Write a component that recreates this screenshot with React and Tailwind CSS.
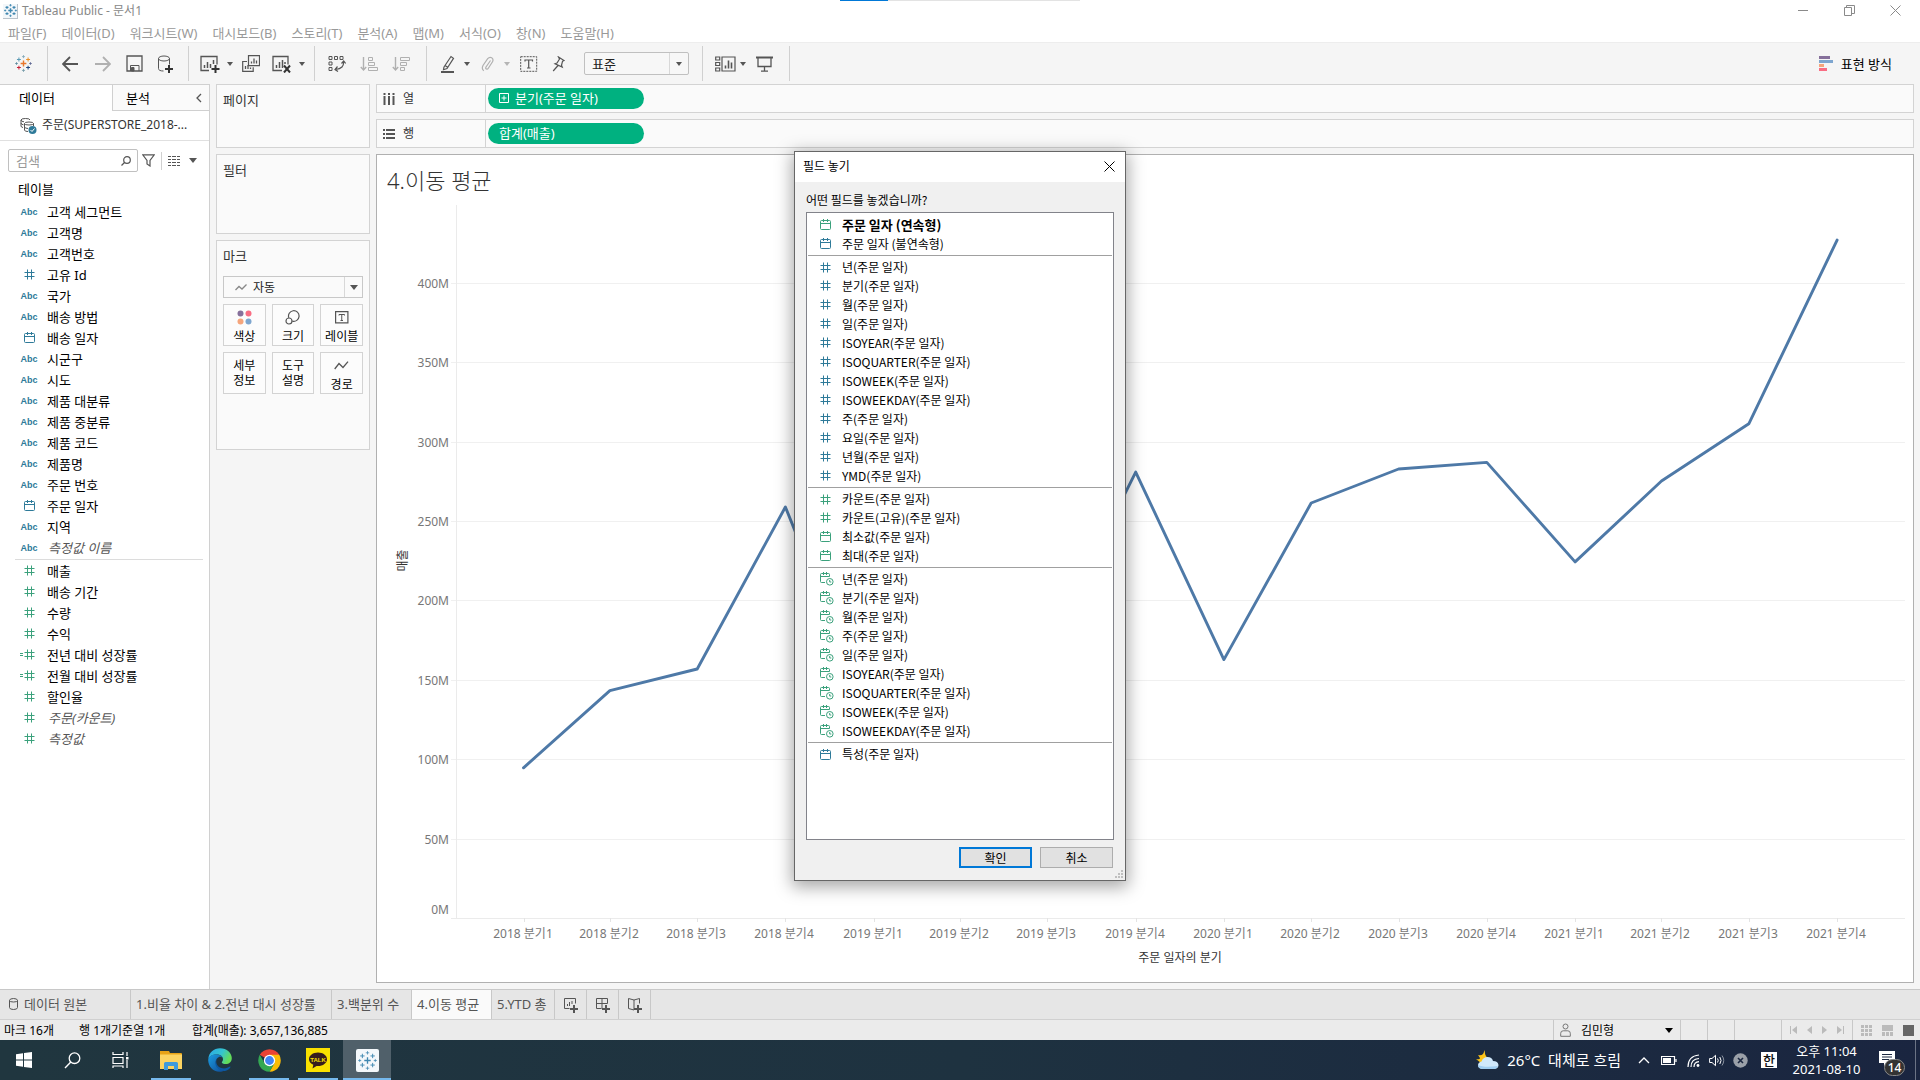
import React from "react";

const BLUE = "#2e7a99";
const GREEN = "#3ba17c";

/* ---------- icons ---------- */

function Icon({ w = 16, h = 16, box, className = "", children, ...rest }) {
  return (
    <svg
      width={w}
      height={h}
      viewBox={box || `0 0 ${w} ${h}`}
      fill="none"
      stroke="currentColor"
      className={`shrink-0 ${className}`}
      aria-hidden="true"
      {...rest}
    >
      {children}
    </svg>
  );
}

const plus = (x, y, r) => `M${x - r} ${y}h${2 * r}M${x} ${y - r}v${2 * r}`;

function TableauMark({ size = 16, colors, sw = 1.2 }) {
  const c = colors;
  return (
    <Icon w={size} h={size} box="0 0 20 20">
      <path d={plus(10, 10, 3.4)} stroke={c[0]} strokeWidth={sw * 1.4} />
      <path d={plus(4.6, 5.2, 2.3)} stroke={c[1]} strokeWidth={sw} />
      <path d={plus(15.4, 5.2, 2.3)} stroke={c[2]} strokeWidth={sw} />
      <path d={plus(4.6, 14.8, 2.3)} stroke={c[3]} strokeWidth={sw} />
      <path d={plus(15.4, 14.8, 2.3)} stroke={c[4]} strokeWidth={sw} />
      <path d={plus(10, 1.9, 1.8)} stroke={c[5]} strokeWidth={sw * 0.8} />
      <path d={plus(10, 18.1, 1.8)} stroke={c[6]} strokeWidth={sw * 0.8} />
      <path d={plus(1.8, 10, 1.6)} stroke={c[7]} strokeWidth={sw * 0.8} />
      <path d={plus(18.2, 10, 1.6)} stroke={c[8]} strokeWidth={sw * 0.8} />
    </Icon>
  );
}

const BRAND = ["#e8762c", "#5c9bb5", "#eb9129", "#c72035", "#1f447e", "#7fa6b8", "#7199a6", "#59879b", "#5b6591"];
const MONO = Array(9).fill("#3f87b0");

function Caret({ className = "text-[#555]" }) {
  return (
    <Icon w={8} h={5} className={className}>
      <path d="M0 0h8L4 5z" fill="currentColor" stroke="none" />
    </Icon>
  );
}

function SmallCaret({ light }) {
  return (
    <Icon w={6} h={4} className={light ? "text-[#b5b5b5]" : "text-[#555]"}>
      <path d="M0 0h6L3 4z" fill="currentColor" stroke="none" />
    </Icon>
  );
}

function Hash({ color }) {
  return (
    <Icon w={11} h={11} color={color}>
      <path d="M3.5 .5v10M7.5 .5v10M.5 3.5h10M.5 7.5h10" />
    </Icon>
  );
}

function CalcHash({ color }) {
  return (
    <Icon w={15} h={11} color={color} className="-ml-1">
      <path d="M7.5 .5v10M11.5 .5v10M4.5 3.5h10M4.5 7.5h10M0 4.5h3M0 6.5h3" />
    </Icon>
  );
}

function Calendar({ color }) {
  return (
    <Icon w={11} h={11} color={color}>
      <path d="M.5 2.5q0-1 1-1h8q1 0 1 1v7q0 1-1 1h-8q-1 0-1-1zM.5 4.5h10M3.5 0v3M7.5 0v3" />
    </Icon>
  );
}

function CalendarClock({ color }) {
  return (
    <Icon w={14} h={14} color={color}>
      <path d="M5 10.500h-3.500q-1 0-1-1v-7q0-1 1-1h7q1 0 1 1v2M.5 4.500h9M3.500 0v3M6.500 0v3" />
      <circle cx="9.800" cy="9.800" r="3.300" />
      <path d="M9.700 8v2h1.600" />
    </Icon>
  );
}

function FieldIcon({ kind, color }) {
  if (kind === "abc")
    return <span className="font-['Liberation_Sans',sans-serif] text-[9px] leading-3 font-bold text-[#2e7a99]">Abc</span>;
  if (kind === "cal") return <Calendar color={color} />;
  if (kind === "clock") return <CalendarClock color={color} />;
  if (kind === "calc") return <CalcHash color={color} />;
  return <Hash color={color} />;
}

/* ---------- title bar, menus ---------- */

function TitleBar() {
  return (
    <header className="relative flex h-[22px] items-center bg-white text-[#888]">
      <div className="ml-[3px] flex size-[15px] items-center justify-center border-r border-b border-[#b9c3cb] bg-[#f3f7fa]">
        <TableauMark size={13} colors={MONO} sw={1.6} />
      </div>
      <h1 className="ml-1 text-[12px] leading-5">Tableau Public - 문서1</h1>
      <div className="absolute inset-x-0 top-0 flex justify-center">
        <div className="h-px w-[48px] bg-[#0078d7]" />
        <div className="h-px w-[192px] bg-[#e3e3e3]" />
      </div>
      <div className="mr-[2px] ml-auto flex h-full pb-px text-[#8a8a8a]">
        <button className="flex w-[46px] items-center justify-center" aria-label="최소화">
          <Icon w={10} h={11}><path d="M0 5.500h10" /></Icon>
        </button>
        <button className="flex w-[46px] items-center justify-center" aria-label="복원">
          <Icon w={11} h={11}><path d="M.5 2.500h7v8h-7zM2.500 2.500v-2h8v8h-3" /></Icon>
        </button>
        <button className="flex w-[46px] items-center justify-center pl-px" aria-label="닫기">
          <Icon w={11} h={11}><path d="M.5.5l10 10M10.500.5l-10 10" /></Icon>
        </button>
      </div>
    </header>
  );
}

const MENUS = ["파일(F)", "데이터(D)", "워크시트(W)", "대시보드(B)", "스토리(T)", "분석(A)", "맵(M)", "서식(O)", "창(N)", "도움말(H)"];

function MenuBar() {
  return (
    <nav className="flex h-[21px] gap-[15px] border-b border-[#ededed] bg-white pl-2 text-[13px] leading-[22px] text-[#999]">
      {MENUS.map((m) => (
        <button key={m} className="whitespace-nowrap">{m}</button>
      ))}
    </nav>
  );
}

/* ---------- toolbar ---------- */

function Tool({ label, w = "w-8", children }) {
  return (
    <button aria-label={label} className={`flex h-8 ${w} shrink-0 items-center justify-center`}>
      {children}
    </button>
  );
}

function Divider() {
  return <div className="h-[35px] w-px shrink-0 bg-[#d0d0d0]" />;
}

function Toolbar() {
  return (
    <div className="flex h-[41px] shrink-0 items-center bg-[#f5f5f5] text-[#555]">
      <Tool label="시작 페이지" w="w-[47px]">
        <TableauMark size={17} colors={BRAND} />
      </Tool>
      <Divider />
      <div className="flex pr-2 pl-[6px]">
        <Tool label="실행 취소">
          <Icon w={17} h={16}><path d="M1 8h15M8 1L1 8l7 7" strokeWidth="1.800" /></Icon>
        </Tool>
        <Tool label="다시 실행">
          <Icon w={17} h={16} className="text-[#b0b0b0]"><path d="M1 8h15M9 1l7 7-7 7" strokeWidth="1.800" /></Icon>
        </Tool>
        <Tool label="저장">
          <Icon w={17} h={17}>
            <path d="M1 1h15v15H1z" strokeWidth="1.300" />
            <path d="M4.500 16v-5.500h8.500V16" />
            <path d="M5.500 12.500h2.500V16h-2.500z" fill="currentColor" />
          </Icon>
        </Tool>
        <Tool label="새 데이터 원본" w="w-[30px]">
          <Icon w={17} h={18}>
            <ellipse cx="7" cy="3.500" rx="5.500" ry="2.500" />
            <path d="M1.500 3.500v10q0 2.500 5 2.500M12.500 3.500v6" />
            <path d="M12 10v8M8 14h8" strokeWidth="2" stroke="#333" />
          </Icon>
        </Tool>
      </div>
      <Divider />
      <div className="flex items-center pr-[6px] pl-[5px]">
        <Tool label="새 워크시트">
          <Icon w={20} h={18}>
            <path d="M9 15.500H1V1.500h16v8" strokeWidth="1.300" />
            <path d="M4.500 13v-3M7.500 13V7M10.500 13V9M13.500 9V5" strokeWidth="1.500" />
            <path d="M15.500 10v8M11.500 14h8" strokeWidth="2" stroke="#333" />
          </Icon>
        </Tool>
        <Tool label="새로 만들기 메뉴" w="w-2"><SmallCaret /></Tool>
        <Tool label="복제" w="w-[34px]">
          <Icon w={18} h={17}>
            <path d="M6.500.7h11v10h-11zM5 6.500H.7v9.800h10.500v-4" strokeWidth="1.200" />
            <path d="M9.500 8.500v-2M12 8.500v-5M14.500 8.500v-3M3.500 14v-3M6 14v-4M8.500 14v-1.500" strokeWidth="1.300" />
          </Icon>
        </Tool>
        <Tool label="시트 지우기" w="w-7">
          <Icon w={20} h={18}>
            <path d="M10 15.500H1V1.500h15v8" strokeWidth="1.300" />
            <path d="M4.500 13v-3M7.500 13V7M10.500 13V5M13 9V7" strokeWidth="1.500" />
            <path d="M12 10.500l6 7M18 10.500l-6 7" strokeWidth="2" stroke="#333" />
          </Icon>
        </Tool>
        <Tool label="지우기 메뉴" w="w-3"><SmallCaret /></Tool>
      </div>
      <Divider />
      <div className="flex items-center pr-[9px] pl-[6px]">
        <Tool label="행과 열 바꾸기">
          <Icon w={18} h={17}>
            <path d="M1 1.500h3v3H1zM6.500 1.500h3v3h-3zM12 1.500h3v3h-3zM1 7h3v3H1zM1 12.500h3v3H1z" />
            <path d="M15.500 6.500q1 7-8 8M13.500 8.500l2.200-2.500 2 2.500M9.500 11.500L7 14.500l3 2" strokeWidth="1.200" />
          </Icon>
        </Tool>
        <Tool label="오름차순 정렬">
          <Icon w={18} h={16} className="text-[#b0b0b0]">
            <path d="M3.500 1v13M.8 11l2.700 3 2.700-3" strokeWidth="1.400" />
            <path d="M8.500 1.500h4v3h-4zM8.500 6.500h6v3h-6zM8.500 11.500h9v3h-9z" />
          </Icon>
        </Tool>
        <Tool label="내림차순 정렬">
          <Icon w={18} h={16} className="text-[#b0b0b0]">
            <path d="M3.500 1v13M.8 11l2.700 3 2.700-3" strokeWidth="1.400" />
            <path d="M8.500 1.500h9v3h-9zM8.500 6.500h6v3h-6zM8.500 11.500h4v3h-4z" />
          </Icon>
        </Tool>
      </div>
      <Divider />
      <div className="flex items-center pl-2">
        <Tool label="강조 표시" w="w-[26px]">
          <Icon w={14} h={18}>
            <path d="M3 12l7-10.500 2.500 1.800L6 13.500l-3.500 1.200zM4 10.500l3 2" strokeWidth="1.200" />
            <path d="M0 17h13" strokeWidth="2" />
          </Icon>
        </Tool>
        <Tool label="강조 표시 메뉴" w="w-3"><SmallCaret /></Tool>
        <Tool label="그룹" w="w-7">
          <Icon w={13} h={16} className="text-[#b0b0b0]">
            <path d="M9.500 4.500L5 11q-.8 1.500.5 2 1 .5 1.800-.8l4.200-6.400q1.300-2.600-.8-4-2.200-1.200-4 .9L2 9.500Q.3 12.800 2.800 14.800" strokeWidth="1.200" />
          </Icon>
        </Tool>
        <Tool label="그룹 메뉴" w="w-3"><SmallCaret light /></Tool>
        <Tool label="마크 레이블 표시">
          <Icon w={18} h={16}>
            <path d="M.7.7h16v14.600h-16z" strokeDasharray="2 1" />
            <path d="M5 5.500V4h7.500v1.500M8.700 4v8M7 12h3.500" strokeWidth="1.200" />
          </Icon>
        </Tool>
        <Tool label="축 고정" w="w-[26px]">
          <Icon w={13} h={16}>
            <path d="M6.500 1l5.500 3.500-1.500.8-1 4 .7 1.700L3 7.800l2-.8L7.500 3zM6 9.500L1.200 15" strokeWidth="1.200" />
          </Icon>
        </Tool>
      </div>
      <div className="relative ml-[13px] flex h-[23px] w-[105px] items-center rounded-xs border border-[#c0c0c0] bg-[#f7f7f7]">
        <select aria-label="맞춤" className="h-full w-full appearance-none bg-transparent pl-[7px] text-[13px] leading-5 text-[#222] outline-none">
          <option>표준</option>
        </select>
        <span className="pointer-events-none absolute inset-y-0 right-0 flex w-[19px] items-center justify-center border-l border-[#d8d8d8]">
          <SmallCaret />
        </span>
      </div>
      <div className="ml-[13px]"><Divider /></div>
      <div className="flex items-center pr-2 pl-[8px]">
        <Tool label="카드 표시" w="w-7">
          <Icon w={21} h={16}>
            <path d="M.7 1h4v3h-4zM.7 6.500h4v3h-4zM.7 12h4v3h-4zM7 1h13v14H7z" strokeWidth="1.200" />
            <path d="M10.500 12.500v-3M13.500 12.500v-8M16.500 12.500v-6" strokeWidth="1.600" />
          </Icon>
        </Tool>
        <Tool label="카드 메뉴" w="w-2"><SmallCaret /></Tool>
        <Tool label="프레젠테이션 모드" w="w-[34px]">
          <Icon w={17} h={16}>
            <path d="M0 1.500h17" strokeWidth="2" />
            <path d="M2 2v8.500h13V2M8.500 10.500V15M5 15.200h7" strokeWidth="1.300" />
          </Icon>
        </Tool>
      </div>
      <Divider />
      <button className="mr-7 ml-auto flex items-center gap-[7px] text-[13px] leading-5 whitespace-nowrap text-black">
        <Icon w={15} h={16} stroke="none">
          <path d="M0 0h11v3H0z" fill="#86709b" />
          <path d="M0 4h14v3H0z" fill="#7ea6cf" />
          <path d="M0 8h5v3H0z" fill="#f5a57c" />
          <path d="M0 12h8v3H0z" fill="#f96d83" />
        </Icon>
        표현 방식
      </button>
    </div>
  );
}

/* ---------- data pane ---------- */

const DIMENSIONS = [
  ["abc", "고객 세그먼트"], ["abc", "고객명"], ["abc", "고객번호"], ["num", "고유 Id"], ["abc", "국가"],
  ["abc", "배송 방법"], ["cal", "배송 일자"], ["abc", "시군구"], ["abc", "시도"], ["abc", "제품 대분류"],
  ["abc", "제품 중분류"], ["abc", "제품 코드"], ["abc", "제품명"], ["abc", "주문 번호"], ["cal", "주문 일자"],
  ["abc", "지역"], ["abc", "측정값 이름", true],
];
const MEASURES = [
  ["num", "매출"], ["num", "배송 기간"], ["num", "수량"], ["num", "수익"], ["calc", "전년 대비 성장률"],
  ["calc", "전월 대비 성장률"], ["num", "할인율"], ["num", "주문(카운트)", true], ["num", "측정값", true],
];

function FieldList({ fields, color }) {
  return (
    <ul>
      {fields.map(([kind, name, generated]) => (
        <li key={name} className="flex h-[21px] items-center">
          <span className="ml-[17px] flex w-6 justify-center"><FieldIcon kind={kind} color={color} /></span>
          <span className={generated ? "ml-[7px] text-[#555] italic" : "ml-[6px]"}>{name}</span>
        </li>
      ))}
    </ul>
  );
}

function DataPane() {
  return (
    <aside className="flex w-[210px] shrink-0 flex-col border-r border-[#d0d0d0] bg-white text-[13px] leading-5 text-black">
      <div className="flex h-[27px]">
        <button className="w-[112px] border-t border-[#d0d0d0] pl-[19px] text-left">데이터</button>
        <button className="flex flex-1 items-center justify-between border border-r-0 border-[#d0d0d0] bg-[#fafafa] pr-[7px] pl-[13px]">
          분석
          <Icon w={6} h={10} className="text-[#555]"><path d="M5 1L1 5l4 4" strokeWidth="1.300" /></Icon>
        </button>
      </div>
      <button className="flex h-[30px] items-center border-b border-[#e0e0e0] pb-px pl-5 text-[#333]">
        <Icon w={17} h={17} className="text-[#555]">
          <path d="M3 10.500q-2-.3-2-1.500V3q0-1.500 4.500-1.500T10 3M1 3q0 1.500 3 1.800M1 6q0 1.500 2.500 1.800" />
          <path d="M8 14.500q-3.500 0-3.500-1.500V6.500Q4.500 5 9 5t4.500 1.500V9M4.500 6.500q0 1.500 4.500 1.500t4.500-1.500M4.500 10q0 1.300 3.500 1.500" />
          <circle cx="12.500" cy="13" r="4" fill={BLUE} stroke="none" />
          <path d="M10.500 13l1.500 1.500 2.500-3" stroke="#fff" />
        </Icon>
        <span className="ml-[5px] text-[12px] whitespace-nowrap">주문(SUPERSTORE_2018-...</span>
      </button>
      <div className="mt-2 flex h-[23px] items-center pl-2 text-[#555]">
        <div className="flex h-full w-[130px] items-center rounded-xs border border-[#c0c0c0] pr-[6px]">
          <input aria-label="필드 검색" className="w-full min-w-0 pl-[7px] outline-none placeholder:text-[#999]" placeholder="검색" />
          <Icon w={10} h={10}>
            <circle cx="6" cy="4" r="3.300" strokeWidth="1.200" />
            <path d="M3.500 6.500L.5 9.500" strokeWidth="1.300" />
          </Icon>
        </div>
        <button aria-label="필터" className="ml-1"><Icon w={13} h={13}><path d="M.7.8h11.600L8 6.500V12L5 10V6.500z" strokeWidth="1.200" /></Icon></button>
        <span className="ml-[6px] h-[18px] w-px bg-[#d0d0d0]" />
        <button aria-label="보기" className="ml-[6px]">
          <Icon w={12} h={10}><path d="M0 .5h12M0 3.500h12M0 6.500h12M0 9.500h12" strokeDasharray="3.300 1" shapeRendering="crispEdges" /></Icon>
        </button>
        <button aria-label="보기 메뉴" className="ml-[9px]"><Caret /></button>
      </div>
      <h2 className="mt-[7px] mb-[2px] ml-[18px] leading-5">테이블</h2>
      <FieldList fields={DIMENSIONS} color={BLUE} />
      <div className="mr-[6px] ml-[15px] border-b border-[#dcdcdc] pt-px" />
      <FieldList fields={MEASURES} color={GREEN} />
    </aside>
  );
}

/* ---------- cards ---------- */

function Card({ title, h, children }) {
  return (
    <section className={`border border-[#d3d3d3] bg-[#fafafa] px-[6px] ${h}`}>
      <h2 className="mt-[5px] text-[13px] leading-5 text-[#333]">{title}</h2>
      {children}
    </section>
  );
}

function MarkButton({ icon, children }) {
  return (
    <button
      className={`flex h-[42px] flex-col items-center border border-[#d3d3d3] bg-[#fcfcfc] text-[12px] leading-[15px] whitespace-nowrap text-black ${icon ? "justify-start gap-[2px] pt-[3px]" : "justify-center"}`}
    >
      {icon && <span className="flex h-[19px] items-center text-[#555]">{icon}</span>}
      <span>{children}</span>
    </button>
  );
}

function Cards() {
  return (
    <div className="ml-[6px] flex w-[154px] shrink-0 flex-col gap-[6px]">
      <Card title="페이지" h="h-16" />
      <Card title="필터" h="h-20" />
      <Card title="마크" h="h-[210px]">
        <div className="relative mt-[10px] flex h-[22px] items-center border border-[#c8c8c8] bg-[#fafafa]">
          <Icon w={12} h={7} className="pointer-events-none absolute left-[11px] text-[#888]">
            <path d="M.5 6L4 2.500 7 5l4.500-4.500" strokeWidth="1.300" />
          </Icon>
          <select aria-label="마크 유형" className="h-full w-full appearance-none bg-transparent pt-px pl-[29px] text-[12px] leading-5 text-[#222] outline-none">
            <option>자동</option>
          </select>
          <span className="pointer-events-none absolute inset-y-0 right-0 flex w-[18px] items-center justify-center border-l border-[#d8d8d8]">
            <Caret />
          </span>
        </div>
        <div className="mt-[6px] grid grid-cols-3 gap-[6px]">
          <MarkButton icon={
            <Icon w={15} h={15} stroke="none">
              <circle cx="3.500" cy="3.500" r="3" fill="#86709b" /><circle cx="11.500" cy="3.500" r="3" fill="#f96d83" />
              <circle cx="3.500" cy="11.500" r="3" fill="#f5a57c" /><circle cx="11.500" cy="11.500" r="3" fill="#7ea6cf" />
            </Icon>}>색상</MarkButton>
          <MarkButton icon={
            <Icon w={15} h={15}>
              <path d="M3.800 7.800a5.300 5.300 0 1 1 3.500 3.300" strokeWidth="1.200" /><circle cx="4" cy="11" r="3" strokeWidth="1.200" />
            </Icon>}>크기</MarkButton>
          <MarkButton icon={
            <Icon w={14} h={13}>
              <path d="M.6.6h12.300v11.300H.6z" strokeWidth="1.200" /><path d="M4 4.500v-1h5.500v1M6.750 3.500v6M5.500 9.500h2.500" />
            </Icon>}>레이블</MarkButton>
          <MarkButton>세부<br />정보</MarkButton>
          <MarkButton>도구<br />설명</MarkButton>
          <MarkButton icon={<Icon w={15} h={9}><path d="M.7 8L5 2.500l4 4L14 .7" strokeWidth="1.300" /></Icon>}>경로</MarkButton>
        </div>
      </Card>
    </div>
  );
}

/* ---------- shelves and view ---------- */

function Shelf({ icon, label, children }) {
  return (
    <div className="flex h-[29px] items-center border border-[#d3d3d3] bg-[#fafafa]">
      <div className="flex h-full w-[109px] items-center gap-2 border-r border-[#d3d3d3] pl-[6px] text-[12px] leading-5 text-[#333]">
        {icon}
        {label}
      </div>
      <button className="ml-[2px] flex h-[21px] w-[156px] items-center rounded-full bg-[#00b180] pb-[2px] pl-[11px] text-[13px] leading-5 text-white">
        {children}
      </button>
    </div>
  );
}

const DAY = 86400000;
const START = Date.UTC(2018, 0, 1);
const SALES = [94.3, 142.9, 156.5, 258.5, 120, 206, 169, 280.5, 162.4, 261, 282.4, 286.6, 223.9, 274.9, 310.9, 426.6];
const LEFT = 79;
const BASE = 713;

function quarterX(i) {
  const days = (Date.UTC(2018 + Math.floor(i / 4), (i % 4) * 3, 1) - START) / DAY;
  return 146.500 + days * 0.9595;
}
const valueY = (v) => BASE - (v * 79.4) / 50;

function Chart() {
  const points = SALES.map((v, i) => `${quarterX(i).toFixed(1)},${valueY(v).toFixed(1)}`).join(" ");
  return (
    <svg viewBox="0 0 1536 777" className="min-h-0 w-full flex-1 text-[12px]" role="img" aria-label="분기별 매출 이동 평균">
      <g stroke="#f0f0f0" shapeRendering="crispEdges">
        {[1, 2, 3, 4, 5, 6, 7, 8].map((n) => (
          <path key={n} d={`M${LEFT - 5} ${Math.round(valueY(n * 50)) + 0.5}H1528`} />
        ))}
        <path d={`M${LEFT + 0.5} 0V${BASE}M${LEFT - 5} ${BASE + 0.5}H1528`} stroke="#ebebeb" />
        {SALES.map((_, i) => (
          <path key={i} d={`M${Math.round(quarterX(i)) + 0.5} ${BASE}v4`} stroke="#e4e4e4" />
        ))}
      </g>
      <polyline points={points} stroke="#4e79a7" strokeWidth="2.900" fill="none" strokeLinejoin="round" strokeLinecap="round" />
      <g fill="#777" textAnchor="end">
        {[1, 2, 3, 4, 5, 6, 7, 8].map((n) => (
          <text key={n} x="72" y={Math.round(valueY(n * 50)) + 5}>{n * 50}M</text>
        ))}
        <text x="72" y="709">0M</text>
      </g>
      <g fill="#777" textAnchor="middle">
        {SALES.map((_, i) => (
          <text key={i} x={Math.round(quarterX(i)) - 1} y="733">{`${2018 + Math.floor(i / 4)} 분기${(i % 4) + 1}`}</text>
        ))}
      </g>
      <g fill="#333" textAnchor="middle">
        <text x="803" y="757">주문 일자의 분기</text>
        <text transform="translate(30 356) rotate(-90)">매출</text>
      </g>
    </svg>
  );
}

function Workspace() {
  return (
    <div className="mr-[6px] ml-[6px] flex min-w-0 flex-1 flex-col gap-[6px] pb-[6px]">
      <Shelf
        label="열"
        icon={<Icon w={12} h={12} className="text-[#555]"><path d="M1.500 0v2M1.500 3v9M6 0v2M6 3v9M10.500 0v2M10.500 3v9" strokeWidth="2" /></Icon>}
      >
        <Icon w={10} h={10} className="mt-px mr-[6px]"><path d="M.5.5h9v9h-9zM5 2.500v5M2.500 5h5" /></Icon>
        분기(주문 일자)
      </Shelf>
      <Shelf
        label="행"
        icon={<Icon w={12} h={12} className="text-[#555]"><path d="M0 2h2M3 2h9M0 6h2M3 6h9M0 10h2M3 10h9" strokeWidth="2" /></Icon>}
      >
        합계(매출)
      </Shelf>
      <main className="flex min-h-0 flex-1 flex-col border border-[#b0b0b0] bg-white">
        <h2 className="mt-[10px] ml-[10px] h-[39px] text-[22px] leading-[30px] font-light text-[#333]">4.이동 평균</h2>
        <Chart />
      </main>
    </div>
  );
}

/* ---------- dialog ---------- */

const OF = "(주문 일자)";
const GROUPS = [
  [["cal", GREEN, "주문 일자 (연속형)", true], ["cal", BLUE, "주문 일자 (불연속형)"]],
  ["년", "분기", "월", "일", "ISOYEAR", "ISOQUARTER", "ISOWEEK", "ISOWEEKDAY", "주", "요일", "년월", "YMD"].map((t) => ["num", BLUE, t + OF]),
  [["num", GREEN, "카운트" + OF], ["num", GREEN, "카운트(고유)" + OF], ["cal", GREEN, "최소값" + OF], ["cal", GREEN, "최대" + OF]],
  ["년", "분기", "월", "주", "일", "ISOYEAR", "ISOQUARTER", "ISOWEEK", "ISOWEEKDAY"].map((t) => ["clock", GREEN, t + OF]),
  [["cal", BLUE, "특성" + OF]],
];

function DropFieldDialog() {
  return (
    <div className="pointer-events-none absolute inset-x-0 top-[151px] flex justify-center">
      <div
        role="dialog"
        aria-labelledby="drop-title"
        className="pointer-events-auto relative flex h-[730px] w-[332px] flex-col border border-[#666] bg-[#f0f0f0] font-['Noto_Sans_CJK_KR','Noto_Sans',sans-serif] text-[12px] text-black shadow-[0_4px_16px_2px_rgba(0,0,0,0.35)]"
      >
        <div className="flex h-[30px] shrink-0 items-center justify-between bg-white pr-[10px] pb-[2px] pl-2">
          <h2 id="drop-title" className="leading-5">필드 놓기</h2>
          <button aria-label="닫기"><Icon w={11} h={11}><path d="M.5.5l10 10M10.500.5l-10 10" /></Icon></button>
        </div>
        <p id="drop-q" className="mt-2 ml-[11px] h-[22px] leading-5">어떤 필드를 놓겠습니까?</p>
        <div role="listbox" aria-labelledby="drop-q" className="mx-[11px] flex-1 border border-[#82838a] bg-white px-px pt-[2px]">
          {GROUPS.map((rows, g) => (
            <div key={g} role="group" className={g ? "mt-[2px] border-t border-[#a0a0a0] pt-[2px]" : ""}>
              {rows.map(([kind, color, name, strong], i) => (
                <div
                  key={name}
                  role="option"
                  aria-selected={!!strong}
                  className={`flex items-center leading-[18px] ${g && !i ? "h-[18px]" : "h-[19px]"} ${strong ? "text-[13px] font-bold" : ""}`}
                >
                  <span className="ml-3 flex w-[22px]"><FieldIcon kind={kind} color={color} /></span>
                  {name}
                </div>
              ))}
            </div>
          ))}
        </div>
        <div className="flex justify-end gap-2 pt-[7px] pr-3 pb-3">
          <button className="h-[21px] w-[73px] border-2 border-[#0078d7] bg-[#e1e1e1] leading-4">확인</button>
          <button className="h-[21px] w-[73px] border border-[#adadad] bg-[#e1e1e1] leading-4">취소</button>
        </div>
        <Icon w={8} h={8} className="absolute right-[2px] bottom-[2px]" stroke="none">
          <path d="M6 0h2v2H6zM3 3h2v2H3zM6 3h2v2H6zM0 6h2v2H0zM3 6h2v2H3zM6 6h2v2H6z" fill="#bfbfbf" />
        </Icon>
      </div>
    </div>
  );
}

/* ---------- sheet tabs and status bar ---------- */

const SHEETS = [
  ["1.비율 차이 & 2.전년 대시 성장률", "w-[201px]"],
  ["3.백분위 수", "w-20"],
  ["4.이동 평균", "w-20", true],
  ["5.YTD 총", "w-[63px]"],
];

function SheetTabs() {
  const addPlus = <path d="M11 8v8M7 12h8" strokeWidth="2" />;
  return (
    <div className="flex h-[30px] shrink-0 border-t border-[#c8c8c8] bg-[#e6e6e6] text-[13px] leading-[28px] text-[#555]">
      <button className="flex w-[131px] items-center gap-[6px] border-r border-[#c8c8c8] pb-px pl-[9px]">
        <Icon w={9} h={12}><path d="M.5 2.500q0-2 4-2t4 2v7q0 2-4 2t-4-2zM.5 2.500q0 1.500 4 1.500t4-1.500" /></Icon>
        데이터 원본
      </button>
      {SHEETS.map(([name, w, active]) => (
        <button key={name} className={`${w} border-r border-[#c8c8c8] pb-px pl-[5px] text-left whitespace-nowrap ${active ? "bg-[#fafafa]" : ""}`}>
          {name}
        </button>
      ))}
      <button aria-label="새 워크시트" className="flex w-8 items-center justify-center border-r border-[#c8c8c8]">
        <Icon w={16} h={16}><path d="M6.500 11.500h-5v-10h11v5M4.500 9V7M6.500 9V5M9 7V4" />{addPlus}</Icon>
      </button>
      <button aria-label="새 대시보드" className="flex w-8 items-center justify-center border-r border-[#c8c8c8]">
        <Icon w={16} h={16}><path d="M6.500 11.500h-5v-10h11v5M7 1.500v10M1.500 6.500h11" />{addPlus}</Icon>
      </button>
      <button aria-label="새 스토리" className="flex w-8 items-center justify-center border-r border-[#c8c8c8]">
        <Icon w={16} h={16}><path d="M7 3L1.500 1.500v10L7 13V3l5.500-1.500v5" />{addPlus}</Icon>
      </button>
    </div>
  );
}

function StatusBar() {
  return (
    <div className="flex h-[21px] shrink-0 border-t border-[#d0d0d0] bg-[#ebebeb] pl-1 text-[12px] leading-[21px] text-black">
      <span className="w-[75px]">마크 16개</span>
      <span className="w-[113px]">행 1개기준열 1개</span>
      <span>합계(매출): 3,657,136,885</span>
      <div className="ml-auto flex">
        <button className="flex w-[127px] items-center border-l border-[#c8c8c8] pr-[7px] pl-[6px]">
          <Icon w={11} h={14} className="mr-[10px] text-[#777]">
            <circle cx="5.500" cy="3.500" r="2.500" /><path d="M.7 13.300v-3q0-2.500 2.500-2.500h4.600q2.500 0 2.500 2.500v3z" />
          </Icon>
          김민형
          <span className="ml-auto"><Caret className="text-black" /></span>
        </button>
        <span className="w-[27px] border-l border-[#c8c8c8]" />
        <span className="w-[27px] border-l border-[#c8c8c8]" />
        <span className="w-[47px] border-l border-[#c8c8c8]" />
        <div className="flex w-[71px] items-center justify-between border-l border-[#c8c8c8] px-2 text-[#bbb]">
          <Icon w={7} h={8} stroke="none"><path d="M0 0h1v8H0zM7 0v8L2 4z" fill="currentColor" /></Icon>
          <Icon w={5} h={8} stroke="none"><path d="M5 0v8L0 4z" fill="currentColor" /></Icon>
          <Icon w={5} h={8} stroke="none"><path d="M0 0v8l5-4z" fill="currentColor" /></Icon>
          <Icon w={7} h={8} stroke="none"><path d="M6 0h1v8H6zM0 0v8l5-4z" fill="currentColor" /></Icon>
        </div>
        <div className="flex w-[68px] items-center justify-between border-l border-[#c8c8c8] pr-[6px] pl-2 text-[#bbb]">
          <Icon w={11} h={11} stroke="none">
            <path d="M0 0h3v3H0zM4 0h3v3H4zM8 0h3v3H8zM0 4h3v3H0zM4 4h3v3H4zM8 4h3v3H8zM0 8h3v3H0zM4 8h3v3H4zM8 8h3v3H8z" fill="currentColor" />
          </Icon>
          <Icon w={11} h={11} stroke="none"><path d="M0 0h11v6H0zM0 7h3v4H0zM4 7h3v4H4zM8 7h3v4H8z" fill="currentColor" /></Icon>
          <Icon w={11} h={11} stroke="none"><path d="M0 0h11v11H0z" fill="#666" /></Icon>
        </div>
      </div>
    </div>
  );
}

/* ---------- taskbar ---------- */

function TaskButton({ label, state = "", children }) {
  return (
    <button aria-label={label} className={`relative flex w-12 items-center justify-center ${state === "active" ? "bg-[#50606a]" : ""}`}>
      {children}
      {state && <span className={`absolute bottom-0 h-[2px] bg-[#76b9ed] ${state === "active" ? "inset-x-0" : "inset-x-1"}`} />}
    </button>
  );
}

function Tray({ w = "w-6", label, children }) {
  return <button aria-label={label} className={`flex ${w} items-center justify-center`}>{children}</button>;
}

function Taskbar() {
  return (
    <footer className="flex h-10 shrink-0 bg-linear-to-r from-[#20363f] via-[#1e3240] to-[#1a2540] text-white">
      <TaskButton label="시작">
        <Icon w={16} h={16} stroke="none"><path d="M0 2.300L7 1.300v6.300H0zM8 1.100L16 0v7.600H8zM0 8.500h7v6.300l-7-1zM8 8.500h8V16l-8-1.100z" fill="#fff" /></Icon>
      </TaskButton>
      <TaskButton label="검색">
        <Icon w={17} h={17}><circle cx="10.500" cy="6.200" r="5.300" strokeWidth="1.300" /><path d="M6.800 10L1 16" strokeWidth="1.400" /></Icon>
      </TaskButton>
      <TaskButton label="작업 보기">
        <Icon w={17} h={16}><path d="M1 0v2.500h10V0M1 5.500h10v6H1zM1 16v-2h10v2M15 0v4M15 8v8" strokeWidth="1.200" /><path d="M14 5h2.500v2.500H14z" fill="#fff" stroke="none" /></Icon>
      </TaskButton>
      <div className="ml-[3px] flex gap-px">
        <TaskButton label="파일 탐색기" state="open">
          <Icon w={22} h={19} stroke="none">
            <path d="M0 0h9l1 2h11q1 0 1 1v15H0z" fill="#e8a317" />
            <path d="M0 3.500h22V18H0z" fill="#fcd462" />
            <path d="M4 19v-6.500q0-1.500 1.500-1.500h11q1.500 0 1.500 1.500V19h-4v-4H8v4z" fill="#3f9bdc" />
          </Icon>
        </TaskButton>
        <TaskButton label="Edge">
          <svg width="24" height="24" viewBox="0 0 24 24" className="shrink-0" aria-hidden="true">
            <defs>
              <linearGradient id="edge-top" x1="0" y1="0" x2="1" y2=".4"><stop offset="0" stopColor="#2aa8ea" /><stop offset=".6" stopColor="#35c4cf" /><stop offset="1" stopColor="#63dc59" /></linearGradient>
              <linearGradient id="edge-side" x1="0" y1="0" x2="1" y2="1"><stop offset="0" stopColor="#1b9de2" /><stop offset="1" stopColor="#0f4a94" /></linearGradient>
            </defs>
            <path d="M.3 11C.8 4.500 5.800.2 12 .2c7 0 11.700 4.800 11.800 9.800 0 4-2.800 6-6 6-2.600 0-4-.8-4-1.600s1.200-1 1.200-3.200c0-2.600-2.500-4.700-6.500-4.700C4.500 6.500 1.300 8.500.3 11z" fill="url(#edge-top)" />
            <path d="M.2 12C.2 8.500 4 6.500 8.500 6.500c3 0 5.500 1.500 6.200 3.500-1-1-2.300-1.200-3.400-1.200C8.500 10 7.500 12.500 7.800 15c.5 4.500 4.500 7.500 8.700 7.200-1.500 1-3 1.600-5 1.600C5 23.800.2 18.500.2 12z" fill="url(#edge-side)" />
            <path d="M9 10.500c-2 3.500 0 9 5.500 9.800 3 .4 5.500-.6 7-1.500.8-.5 1.200.1.800.8-1.200 1.800-3.300 3.600-6 3.300-5-.2-8.600-3.400-8.900-7.300-.1-2 .4-3.800 1.600-5.100z" fill="#0c59a4" />
          </svg>
        </TaskButton>
        <TaskButton label="Chrome" state="open">
          <svg width="23" height="23" viewBox="-12 -12 24 24" className="shrink-0" aria-hidden="true">
            <path d="M0 0L-10.200-5.900A11.800 11.800 0 0 1 10.200-5.900z" fill="#ea4335" />
            <path d="M0-5.900H10.200A11.800 11.800 0 0 1 0 11.800L5.100 2.950z" fill="#fbbc05" />
            <path d="M-10.200-5.900L-5.100 2.950 0 5.500 5.100 2.950 0 11.800A11.800 11.800 0 0 1-10.200-5.900z" fill="#34a853" />
            <circle r="5.900" fill="#fff" /><circle r="4.600" fill="#4285f4" />
          </svg>
        </TaskButton>
        <TaskButton label="카카오톡" state="open">
          <svg width="24" height="24" viewBox="0 0 24 24" className="shrink-0" aria-hidden="true">
            <path d="M0 0h24v24H0z" fill="#fae100" />
            <path d="M12 4.500c5 0 9 2.900 9 6.700S17 18 12 18l-1.500-.1L6.500 20.500l.8-3.700C4.700 15.600 3 13.600 3 11.200c0-3.800 4-6.700 9-6.700z" fill="#371d1e" />
            <text x="12" y="13.500" textAnchor="middle" fill="#fae100" className="font-['Liberation_Sans',sans-serif] text-[6px] font-bold">TALK</text>
          </svg>
        </TaskButton>
        <TaskButton label="Tableau" state="active">
          <span className="flex size-[23px] items-center justify-center rounded-xs bg-[#f4f8fb]"><TableauMark size={19} colors={MONO} sw={1} /></span>
        </TaskButton>
      </div>
      <div className="ml-auto flex">
        <button className="mr-[11px] flex items-center gap-2 text-[15px] leading-5 whitespace-nowrap">
          <Icon w={23} h={20} stroke="none">
            <path d="M9 0q-1 6 4 9L5 13 0 9q4 1 4-1L2 5q3 1 5-1z" fill="#fcc419" />
            <path d="M6 19q-4-.5-4-4 .3-3 3.500-3.500Q7 7 11.500 7t5.500 4q5 0 5.500 4 0 3.500-4 4z" fill="#cfe8fa" />
            <path d="M6 19q-4-.5-4-4 6 3 20 1-1 2.600-3.500 3z" fill="#9fcdf0" />
          </Icon>
          <span>26°C&nbsp; 대체로 흐림</span>
        </button>
        <Tray label="숨겨진 아이콘"><Icon w={12} h={7}><path d="M1 6l5-5 5 5" strokeWidth="1.300" /></Icon></Tray>
        <Tray label="배터리" w="w-[25px]">
          <Icon w={16} h={9}><path d="M.5.5h13v8H.5zM15 3v3" strokeWidth="1.200" /><path d="M2 2h8v5H2z" fill="#fff" stroke="none" /></Icon>
        </Tray>
        <Tray label="네트워크">
          <Icon w={13} h={13}>
            <path d="M1 13Q1 2 12 1M4 13Q4 5 12 4.500M7 13q0-5 5-5.300" strokeWidth="1.200" /><circle cx="11" cy="11.500" r="1.400" fill="#fff" stroke="none" />
          </Icon>
        </Tray>
        <Tray label="볼륨" w="w-[23px]">
          <Icon w={16} h={13}><path d="M.6 4.500H3L6.500 1.300v10.400L3 8.500H.6zM8.500 4.500q1.500 2 0 4M10.800 3q2.500 3.500 0 7" /><path d="M13 1.500q3.500 5 0 10" stroke="#8b93a0" /></Icon>
        </Tray>
        <Tray label="알림 상태">
          <Icon w={15} h={15}><circle cx="7.500" cy="7.500" r="7.200" fill="#9aa0a8" stroke="none" /><path d="M5 5l5 5M10 5l-5 5" stroke="#1b2740" strokeWidth="1.600" /></Icon>
        </Tray>
        <Tray label="한글 입력" w="w-[34px]">
          <span className="flex size-4 items-center justify-center bg-white text-[13px] leading-4 font-medium text-[#111]">한</span>
        </Tray>
        <button className="w-[81px] text-center text-[13px] leading-[18px]">
          오후 11:04<br />2021-08-10
        </button>
        <button aria-label="알림 14개" className="relative flex w-12 items-center pl-3">
          <Icon w={16} h={15} stroke="none" className="mb-1"><path d="M0 0h16v12H9l-4 3v-3H0z" fill="#fff" /><path d="M3 3h10v1H3zM3 5.500h10v1H3zM3 8h7v1H3z" fill="#1b2740" /></Icon>
          <span className="absolute top-[19px] left-[17px] flex h-[17px] w-[21px] items-center justify-center rounded-full border border-[#888] bg-[#333] text-[12px] leading-4 font-medium">14</span>
        </button>
        <div className="w-[5px] border-l border-[#6b7385]" />
      </div>
    </footer>
  );
}

export default function App() {
  return (
    <div className="relative flex min-h-screen flex-col bg-[#f5f5f5] font-['Noto_Sans','Noto_Sans_CJK_KR',sans-serif]">
      <TitleBar />
      <MenuBar />
      <Toolbar />
      <div className="flex min-h-0 flex-1">
        <DataPane />
        <Cards />
        <Workspace />
      </div>
      <SheetTabs />
      <StatusBar />
      <Taskbar />
      <DropFieldDialog />
    </div>
  );
}
